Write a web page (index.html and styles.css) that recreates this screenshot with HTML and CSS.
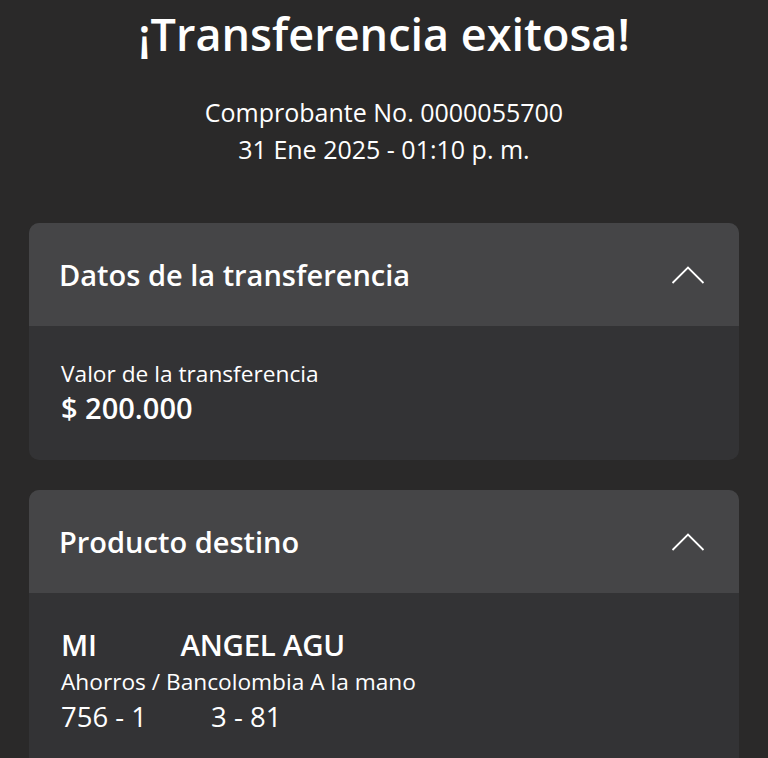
FILE: index.html
```html
<!DOCTYPE html>
<html lang="es">
<head>
    <meta charset="UTF-8">
    <meta name="viewport" content="width=device-width, initial-scale=1.0">
    <title>Transferencia exitosa</title>
    <link rel="stylesheet" href="styles.css">
</head>
<body>
    <div class="encabezado">
        <h1>¡Transferencia exitosa!</h1>
        <p class="comprobante">Comprobante No. 0000055700<br>31 Ene 2025 - 01:10 p. m.</p>
    </div>

    <!-- Datos de la transferencia -->
    <div class="tarjeta">
        <div class="tarjeta-titulo">
            <span>Datos de la transferencia</span>
            <svg class="flecha" width="34" height="20" viewBox="0 0 34 20"><path d="M1.5 18 L17 2.5 L32.5 18" fill="none" stroke="#fff" stroke-width="1.8"/></svg>
        </div>
        <div class="tarjeta-cuerpo">
            <div class="etiqueta">Valor de la transferencia</div>
            <div class="valor">$ 200.000</div>
        </div>
    </div>

    <!-- Producto destino -->
    <div class="tarjeta">
        <div class="tarjeta-titulo">
            <span>Producto destino</span>
            <svg class="flecha" width="34" height="20" viewBox="0 0 34 20"><path d="M1.5 18 L17 2.5 L32.5 18" fill="none" stroke="#fff" stroke-width="1.8"/></svg>
        </div>
        <div class="tarjeta-cuerpo destino">
            <div class="nombre">MI<span class="hueco-nombre"></span>ANGEL AGU</div>
            <div class="etiqueta">Ahorros / Bancolombia A la mano</div>
            <div class="cuenta">756 - 1<span class="hueco-cuenta"></span>3 - 81</div>
        </div>
    </div>
</body>
</html>
```

FILE: styles.css
```css
body {
    margin: 0;
    background-color: #2a2929;
    color: #fff;
    font-family: "Open Sans", sans-serif;
}

.encabezado {
    text-align: center;
    padding-top: 8px;
    padding-bottom: 55px;
}

h1 {
    margin: 0;
    font-size: 45px;
    font-weight: 600;
    line-height: 52px;
}

.comprobante {
    margin: 34px 0 0 0;
    font-size: 25px;
    line-height: 37px;
}

/* Tarjetas */
.tarjeta {
    margin: 0 29px 30px 29px;
    border-radius: 10px;
    overflow: hidden;
    background-color: #333335;
}

.tarjeta-titulo {
    background-color: #454547;
    height: 103px;
    padding: 0 34px 0 30px;
    display: flex;
    align-items: center;
    justify-content: space-between;
    font-size: 29px;
    font-weight: 600;
}

.tarjeta-cuerpo {
    padding: 31px 32px 34px 32px;
}

.etiqueta {
    font-size: 22.7px;
    line-height: 33px;
}

.valor {
    font-size: 29px;
    font-weight: 600;
    line-height: 36px;
}

.destino {
    padding-top: 33px;
}

.nombre {
    font-size: 29.5px;
    font-weight: 600;
    line-height: 38px;
    letter-spacing: -0.3px;
}

.destino .etiqueta {
    line-height: 35px;
}

.cuenta {
    font-size: 27.5px;
    line-height: 36px;
}

.hueco-nombre {
    display: inline-block;
    width: 84px;
}

.hueco-cuenta {
    display: inline-block;
    width: 64px;
}
```
